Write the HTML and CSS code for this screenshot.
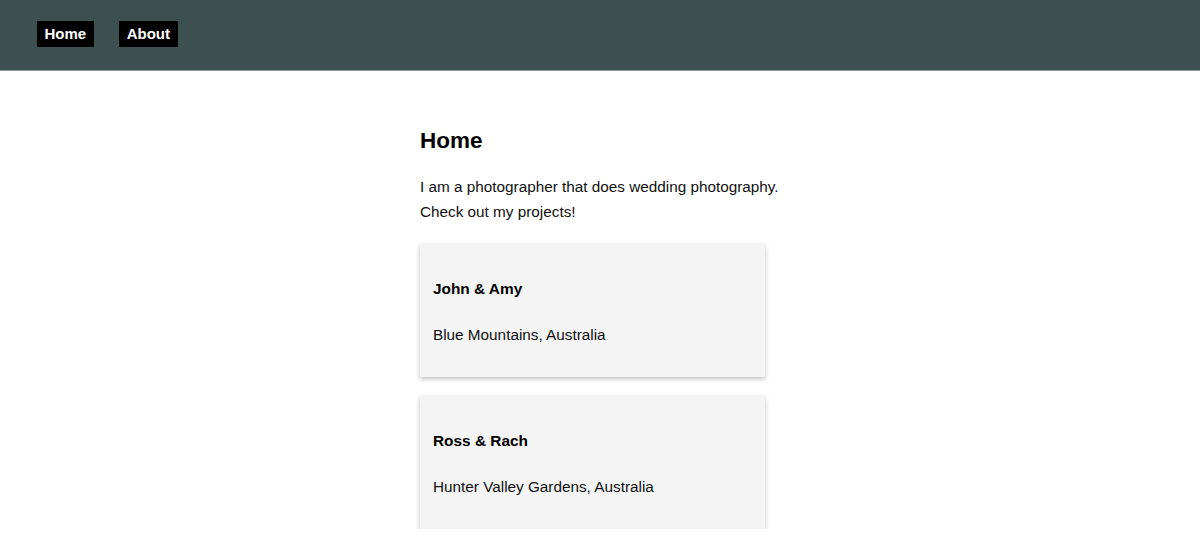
FILE: index.html
```html
<!DOCTYPE html>
<html>
<head>
<meta charset="utf-8">
<link rel="stylesheet" href="styles.css">
</head>
<body>
<header class="topbar">
  <nav class="nav">
    <a class="nav-link" href="#">Home</a>
    <a class="nav-link" href="#">About</a>
  </nav>
</header>
<main class="content">
  <h1 class="title">Home</h1>
  <p class="intro">I am a photographer that does wedding photography.<br>Check out my projects!</p>
  <div class="cards">
    <div class="card">
      <h3 class="card-title">John &amp; Amy</h3>
      <p class="card-text">Blue Mountains, Australia</p>
    </div>
    <div class="card">
      <h3 class="card-title">Ross &amp; Rach</h3>
      <p class="card-text">Hunter Valley Gardens, Australia</p>
    </div>
  </div>
</main>
</body>
</html>
```
FILE: styles.css
```css
* { box-sizing: border-box; }
html, body { margin: 0; padding: 0; }
body {
  font-family: "Liberation Sans", Arial, sans-serif;
  color: #111;
  background: #fff;
}
.topbar {
  height: 71px;
  background: #3d5050;
  display: flex;
  align-items: center;
  padding-left: 37px;
  padding-bottom: 2px;
  border-bottom: 1px solid #8a9a9a;
}
.nav {
  display: flex;
  gap: 25px;
}
.nav-link {
  display: block;
  background: #000;
  color: #fff;
  font-weight: bold;
  font-size: 15px;
  line-height: 26px;
  padding: 0 8px 0 7.5px;
  text-decoration: none;
}
.content {
  width: 360px;
  margin: 0 auto;
  padding-top: 56px;
}
.title {
  font-size: 22.5px;
  font-weight: bold;
  margin: 0 0 19px;
  line-height: 28px;
  color: #000;
}
.intro {
  font-size: 15.3px;
  line-height: 25px;
  margin: 0 0 20px;
  white-space: nowrap;
}
.cards {
  display: flex;
  flex-direction: column;
  gap: 19px;
}
.card {
  width: 345px;
  height: 133px;
  background: #f4f4f4;
  box-shadow: 0 2px 5px rgba(0,0,0,0.25);
  padding: 36px 13px 0;
}
.card-title {
  font-size: 15.4px;
  font-weight: bold;
  margin: 0;
  line-height: 18px;
  color: #000;
}
.card-text {
  font-size: 15.3px;
  margin: 28px 0 0;
  line-height: 18px;
}
```
